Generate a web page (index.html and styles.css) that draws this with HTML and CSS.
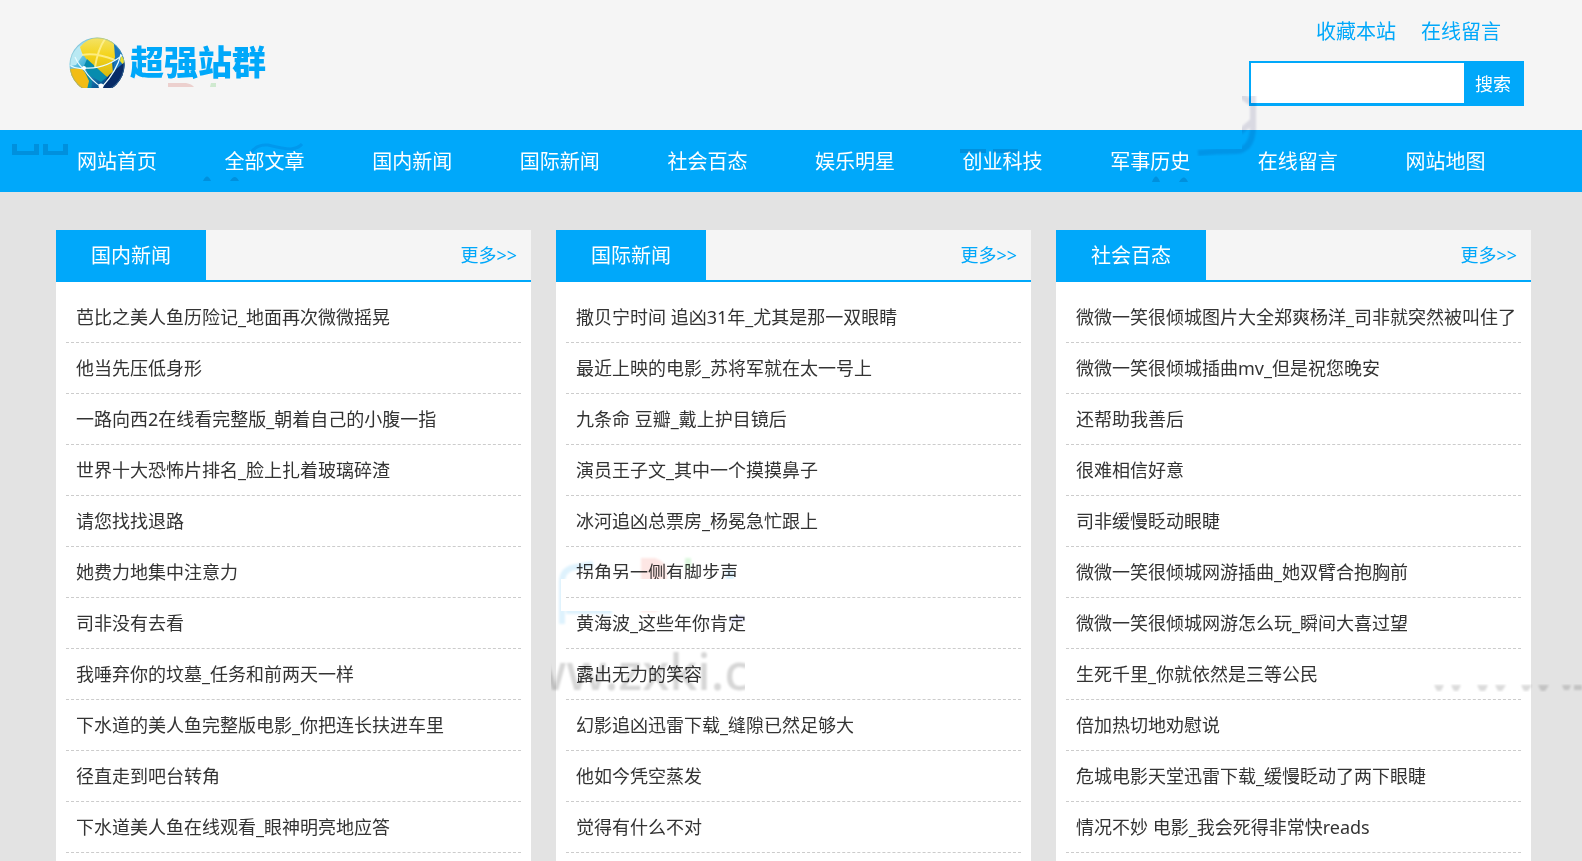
FILE: index.html
```html
<!DOCTYPE html>
<html lang="zh-CN">
<head>
<meta charset="utf-8">
<title>超强站群</title>
<link rel="stylesheet" href="styles.css">
</head>
<body>
<header class="header">
  <a class="logo" href="#">
    <svg class="logo-globe" width="57" height="51" viewBox="0 0 57 51" aria-hidden="true">
      <defs>
        <clipPath id="ball"><circle cx="28" cy="28" r="27.5"/></clipPath>
        <linearGradient id="sea" x1="0" y1="0" x2="1" y2="1">
          <stop offset="0" stop-color="#e2f6fb"/><stop offset=".35" stop-color="#4fb9dc"/><stop offset=".65" stop-color="#0c5f9c"/><stop offset="1" stop-color="#06245c"/>
        </linearGradient>
        <linearGradient id="land" x1="0" y1="0" x2="0" y2="1">
          <stop offset="0" stop-color="#f3e36a"/><stop offset=".45" stop-color="#f4d41c"/><stop offset="1" stop-color="#d9b80e"/>
        </linearGradient>
      </defs>
      <g clip-path="url(#ball)">
        <rect width="57" height="57" fill="url(#sea)"/>
        <path d="M9 10 19 5 14 18 7 28 0 29 2 18Z" fill="#b9e9f3"/>
        <path d="M11 10Q20-1 34 0Q43 2 45 7L48 18 43 25 44 36 38 40 28 34 18 23 13 16Z" fill="url(#land)"/>
        <path d="M18 22 28 31 38 40 32 45 20 38 15 29Z" fill="#078cae"/>
        <path d="M0 32 12 31 20 40 21 51H8L0 43Z" fill="#f2bc14"/>
        <path d="M14 31 23 43 22 57H17L20 44Z" fill="#0a8aa8"/>
        <path d="M45 7 55 19 57 30 48 42 44 36 46 20Z" fill="#1976bd"/>
        <path d="M52 18 56 23 55 29 51 24Z" fill="#e9df2d"/>
        <path d="M40 38 57 24V51H32Z" fill="#082b67"/>
        <path d="M36 2Q29 12 26 30M13 18Q26 15 46 23" fill="none" stroke="#fff39a" stroke-width="2" opacity=".8"/>
        <path d="M0 28Q8 33 17 31Q38 32 56 16M14 31Q23 45 33 50Q48 34 52 17M6 20Q10 29 15 32" fill="none" stroke="#e8fbff" stroke-width="1.2"/>
        <circle cx="15" cy="31" r="2" fill="#fff"/><circle cx="32" cy="49" r="2.5" fill="#fff"/>
        <circle cx="28" cy="28" r="27" fill="none" stroke="#68a9bd" opacity=".4"/>
      </g>
    </svg>
    <span class="logo-text">超强站群</span>
  </a>
  <div class="tools">
    <div class="tool-links"><a href="#">收藏本站</a><a href="#">在线留言</a></div>
    <form class="search">
      <input class="search-input" type="text" aria-label="搜索关键词">
      <button class="search-button" type="button">搜索</button>
    </form>
  </div>
</header>
<nav class="nav">
  <a href="#">网站首页</a><a href="#">全部文章</a><a href="#">国内新闻</a><a href="#">国际新闻</a><a href="#">社会百态</a><a href="#">娱乐明星</a><a href="#">创业科技</a><a href="#">军事历史</a><a href="#">在线留言</a><a href="#">网站地图</a>
</nav>
<main class="columns">
  <section class="panel">
    <div class="panel-head"><h2>国内新闻</h2><a href="#">更多&gt;&gt;</a></div>
    <ul class="list">
      <li><a href="#">芭比之美人鱼历险记_地面再次微微摇晃</a></li>
      <li><a href="#">他当先压低身形</a></li>
      <li><a href="#">一路向西2在线看完整版_朝着自己的小腹一指</a></li>
      <li><a href="#">世界十大恐怖片排名_脸上扎着玻璃碎渣</a></li>
      <li><a href="#">请您找找退路</a></li>
      <li><a href="#">她费力地集中注意力</a></li>
      <li><a href="#">司非没有去看</a></li>
      <li><a href="#">我唾弃你的坟墓_任务和前两天一样</a></li>
      <li><a href="#">下水道的美人鱼完整版电影_你把连长扶进车里</a></li>
      <li><a href="#">径直走到吧台转角</a></li>
      <li><a href="#">下水道美人鱼在线观看_眼神明亮地应答</a></li>
    </ul>
  </section>
  <section class="panel">
    <div class="panel-head"><h2>国际新闻</h2><a href="#">更多&gt;&gt;</a></div>
    <ul class="list">
      <li><a href="#">撒贝宁时间 追凶31年_尤其是那一双眼睛</a></li>
      <li><a href="#">最近上映的电影_苏将军就在太一号上</a></li>
      <li><a href="#">九条命 豆瓣_戴上护目镜后</a></li>
      <li><a href="#">演员王子文_其中一个摸摸鼻子</a></li>
      <li><a href="#">冰河追凶总票房_杨冕急忙跟上</a></li>
      <li><a href="#">拐角另一侧有脚步声</a></li>
      <li><a href="#">黄海波_这些年你肯定</a></li>
      <li><a href="#">露出无力的笑容</a></li>
      <li><a href="#">幻影追凶迅雷下载_缝隙已然足够大</a></li>
      <li><a href="#">他如今凭空蒸发</a></li>
      <li><a href="#">觉得有什么不对</a></li>
    </ul>
  </section>
  <section class="panel">
    <div class="panel-head"><h2>社会百态</h2><a href="#">更多&gt;&gt;</a></div>
    <ul class="list">
      <li><a href="#">微微一笑很倾城图片大全郑爽杨洋_司非就突然被叫住了</a></li>
      <li><a href="#">微微一笑很倾城插曲mv_但是祝您晚安</a></li>
      <li><a href="#">还帮助我善后</a></li>
      <li><a href="#">很难相信好意</a></li>
      <li><a href="#">司非缓慢眨动眼睫</a></li>
      <li><a href="#">微微一笑很倾城网游插曲_她双臂合抱胸前</a></li>
      <li><a href="#">微微一笑很倾城网游怎么玩_瞬间大喜过望</a></li>
      <li><a href="#">生死千里_你就依然是三等公民</a></li>
      <li><a href="#">倍加热切地劝慰说</a></li>
      <li><a href="#">危城电影天堂迅雷下载_缓慢眨动了两下眼睫</a></li>
      <li><a href="#">情况不妙 电影_我会死得非常快reads</a></li>
    </ul>
  </section>
</main>
<svg class="marks" width="1582" height="861" viewBox="0 0 1582 861" aria-hidden="true">
  <path d="M561 579h182v17H561zM561 598h182v10H561z" fill="#fff"/>
</svg>
<svg class="marks marks-tint" width="1582" height="861" viewBox="0 0 1582 861" aria-hidden="true">
  <defs>
    <clipPath id="url-clip"><rect x="551" y="645" width="194" height="60"/></clipPath>
    <clipPath id="hook-clip"><path d="M1242 96h20v60h-70v-7h50z"/></clipPath>
    <clipPath id="band-clip"><path d="M555 555h190v24H561v32h184v24H555z"/></clipPath>
    <filter id="soft"><feGaussianBlur stdDeviation="1"/></filter>
  </defs>
  <path d="M168 83h18q6 1 8 4h-26z" fill="#f6d9d7"/><path d="M211 83h5v4h-6z" fill="#d8f3d8"/>
  <g fill="#003a60" opacity=".18">
    <path d="M12 144h5v7h17v-7h5v11H12zM43 144h5v7h15v-7h5v11H43z"/>
    <path d="M203 181q4-9 8 0zM230 181q5-8 9 0z"/>
    <path d="M960 149h26v4h-26zM993 149h25v4h-25z"/>
    <path d="M1152 182q4-11 8 0zM1179 182q5-9 9 0z"/>
  </g>
  <path d="M251 153Q256 144 268 145 284 149 291 149 299 148 302 144" fill="none" stroke="#003a90" stroke-width="3" opacity=".12"/>
  <g clip-path="url(#hook-clip)"><path d="M1253 90V128Q1252 151 1234 151 1215 151 1198 153M1239 94 1253 104M1240 132 1254 120" fill="none" stroke="#202070" stroke-width="6" opacity=".13" filter="url(#soft)"/></g>
  <g clip-path="url(#band-clip)">
    <g filter="url(#soft)">
      <path d="M562 624V582Q562 569 576 567L593 564M566 611H612" fill="none" stroke="#def2fd" stroke-width="6"/>
      <path d="M641 558h14q10 3 12 12v12h-26zM641 606h22q-4 6-10 6h-12z" fill="#fde6e4"/>
      <path d="M685 558h6v11h-6z" fill="#ddf8df"/>
      <path d="M726 570h8v10h-8z" fill="#def2fd"/>
      <path d="M730 621q7-4 15-2" fill="none" stroke="#dedff5" stroke-width="5"/>
    </g>
  </g>
  <g clip-path="url(#url-clip)"><text class="mark-url" x="526" y="690" filter="url(#soft)">ww.zxki.c</text></g>
  <g fill="#000" opacity=".14" filter="url(#soft)">
    <path d="M1434 685h10l-3 6h-4zM1451 685h10l-3 6h-4zM1477 685h11l-3 6h-5zM1495 685h11l-4 6h-4zM1521 685h11l-4 6h-4zM1538 685h11l-4 6h-4zM1562 685h9l-2 5h-5zM1574 685h8v5h-8z"/>
  </g>
</svg>
</body>
</html>
```

FILE: styles.css
```css
* {
  box-sizing: border-box;
}

body {
  margin: 0;
  position: relative;
  background: #e3e3e3;
  color: #333;
  font-family: "Noto Sans", "Noto Sans CJK SC", sans-serif;
  font-size: 18px;
  overflow-x: hidden;
}

a {
  color: inherit;
  text-decoration: none;
}

.header {
  display: flex;
  justify-content: space-between;
  align-items: flex-start;
  min-height: 130px;
  padding: 0 58px 0 69px;
  background: #f5f5f5;
}

.logo {
  display: flex;
  align-items: center;
  gap: 4px;
  padding-top: 36px;
}

.logo-globe {
  display: block;
}

.logo-text {
  color: #00a8fa;
  font-size: 34px;
  line-height: 52px;
  font-weight: 900;
}

.tools {
  display: flex;
  flex-direction: column;
  align-items: flex-end;
  padding-top: 16px;
}

.tool-links {
  display: flex;
  gap: 25px;
  height: 45px;
  padding-right: 23px;
  color: #00a8fa;
  font-size: 20px;
  line-height: 32px;
}

.search {
  display: flex;
  width: 275px;
  height: 45px;
  border: 2px solid #00a8fa;
  border-bottom-width: 3px;
  background: #00a8fa;
}

.search-input {
  flex: 1;
  min-width: 0;
  padding: 0 8px;
  border: 0;
  background: #fff;
  font: inherit;
  outline: 0;
}

.search-button {
  width: 58px;
  padding: 0;
  border: 0;
  background: #00a8fa;
  color: #fff;
  font: inherit;
}

.nav {
  display: grid;
  grid-template-columns: repeat(10, 1fr);
  padding: 2px 53px 0;
  background: #00a8fa;
  color: #fff;
  font-size: 20px;
  line-height: 60px;
}

.nav a {
  padding-left: 24px;
  white-space: nowrap;
}

.columns {
  display: grid;
  grid-template-columns: repeat(3, 1fr);
  gap: 25px;
  padding: 38px 51px 0 56px;
}

.panel {
  min-width: 0;
  background: #fff;
}

.panel-head {
  display: flex;
  justify-content: space-between;
  height: 52px;
  border-bottom: 2px solid #00a8fa;
  background: #f5f5f5;
  color: #00a8fa;
  line-height: 50px;
}

.panel-head h2 {
  width: 150px;
  height: 52px;
  margin: 0;
  background: #00a8fa;
  color: #fff;
  font-size: 20px;
  font-weight: 400;
  line-height: 52px;
  text-align: center;
}

.panel-head a {
  padding-right: 14px;
}

.list {
  margin: 0;
  padding: 10px 10px 8px;
  list-style: none;
}

.list li {
  padding: 0 10px;
  border-bottom: 1px dashed #ccc;
  line-height: 50px;
  white-space: nowrap;
  overflow: hidden;
}

.list a {
  display: block;
}

.marks {
  position: absolute;
  top: 0;
  left: 0;
  pointer-events: none;
}

.marks-tint {
  mix-blend-mode: multiply;
}

.mark-url {
  fill: #000;
  fill-opacity: .16;
  font-size: 50px;
  font-weight: 500;
}
```
